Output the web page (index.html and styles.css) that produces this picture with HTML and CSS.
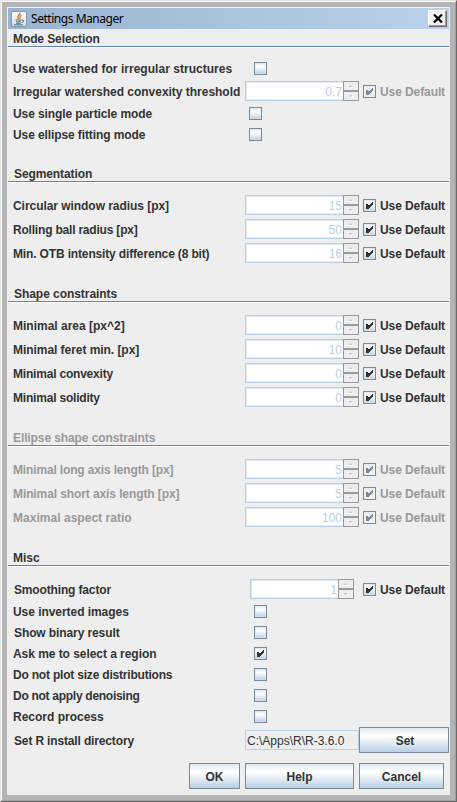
FILE: index.html
```html
<!DOCTYPE html>
<html lang="en">
<head>
<meta charset="utf-8">
<title>Settings Manager</title>
<link rel="stylesheet" href="styles.css">
</head>
<body>
<svg class="defs" width="0" height="0">
  <symbol id="check" viewBox="0 0 11 11"><path d="M2 4h2v1h2v-1h1v-1h1v-1h1v3h-1v1h-1v1h-1v1h-1v1h-3z"/></symbol>
  <symbol id="arrows" viewBox="0 0 16 20">
    <path fill="#999" d="M0 0h16v20H0z"/>
    <path fill="#eee" d="M1 1h14v8H1zM1 11h14v8H1z"/>
    <path fill="#fff" d="M7 6h3v1H7zM8 16h1v-1h1v1H9v1H8z"/>
    <path fill="#b8cfe5" d="M7 4h1v1h1v1H6V5h1zM6 14h3v1H8v1H7v-1H6z"/>
  </symbol>
</svg>
<main class="window">
  <header class="titlebar">
    <svg class="java" viewBox="0 0 16 16">
      <defs><linearGradient id="tile" x2="0" y2="1"><stop stop-color="#fff"/><stop offset="1" stop-color="#d4dce2"/></linearGradient></defs>
      <rect x=".5" y=".5" width="15" height="15" rx="1.5" fill="url(#tile)" stroke="#8995a0"/>
      <path d="M9 1.8C9.2 4 5.6 4.5 7 7l.8 1M10.5 4.2C7.4 5.6 9.8 6.4 8.4 8" fill="none" stroke="#e57a1c" stroke-width="1.4"/>
      <path d="M4.5 9h6M5 10.8h5M5.2 12.3h4.5M3 13.8h9M11 9.2c2.5-.7 2.2 2-.3 2.3" fill="none" stroke="#4a6f88" stroke-width="1"/>
    </svg>
    <h1>Settings Manager</h1>
    <button class="close" aria-label="Close"><svg viewBox="0 0 10 9"><path d="M1 .5l8 8M9 .5l-8 8" stroke="#000" stroke-width="2.2"/></svg></button>
  </header>

  <section>
    <h2 class="k2">Mode Selection</h2>
    <div class="rows">
      <div class="row"><label class="k0">Use watershed for irregular structures</label><i class="box mid"></i></div>
      <div class="row tall"><label class="k1 wide">Irregular watershed convexity threshold</label><div class="spin"><b>0.7</b><svg><use href="#arrows"/></svg></div><div class="default off"><i class="box"><svg><use href="#check"/></svg></i><span>Use Default</span></div></div>
      <div class="row"><label class="k2">Use single particle mode</label><i class="box near"></i></div>
      <div class="row"><label class="k2">Use ellipse fitting mode</label><i class="box near"></i></div>
    </div>
  </section>

  <section>
    <h2 class="k2 inset">Segmentation</h2>
    <div class="rows">
      <div class="row tall"><label class="k1">Circular window radius [px]</label><div class="spin"><b>15</b><svg><use href="#arrows"/></svg></div><div class="default"><i class="box"><svg><use href="#check"/></svg></i><span>Use Default</span></div></div>
      <div class="row tall"><label class="k4">Rolling ball radius [px]</label><div class="spin"><b>50</b><svg><use href="#arrows"/></svg></div><div class="default"><i class="box"><svg><use href="#check"/></svg></i><span>Use Default</span></div></div>
      <div class="row tall"><label class="k3">Min. OTB intensity difference (8 bit)</label><div class="spin"><b>16</b><svg><use href="#arrows"/></svg></div><div class="default"><i class="box"><svg><use href="#check"/></svg></i><span>Use Default</span></div></div>
    </div>
  </section>

  <section>
    <h2 class="k1 inset">Shape constraints</h2>
    <div class="rows">
      <div class="row tall"><label>Minimal area [px^2]</label><div class="spin"><b>0</b><svg><use href="#arrows"/></svg></div><div class="default"><i class="box"><svg><use href="#check"/></svg></i><span>Use Default</span></div></div>
      <div class="row tall"><label class="k1">Minimal feret min. [px]</label><div class="spin"><b>10</b><svg><use href="#arrows"/></svg></div><div class="default"><i class="box"><svg><use href="#check"/></svg></i><span>Use Default</span></div></div>
      <div class="row tall"><label class="k4">Minimal convexity</label><div class="spin"><b>0</b><svg><use href="#arrows"/></svg></div><div class="default"><i class="box"><svg><use href="#check"/></svg></i><span>Use Default</span></div></div>
      <div class="row tall"><label class="k4">Minimal solidity</label><div class="spin"><b>0</b><svg><use href="#arrows"/></svg></div><div class="default"><i class="box"><svg><use href="#check"/></svg></i><span>Use Default</span></div></div>
    </div>
  </section>

  <section class="disabled">
    <h2 class="k2">Ellipse shape constraints</h2>
    <div class="rows">
      <div class="row tall"><label class="k3">Minimal long axis length [px]</label><div class="spin"><b>5</b><svg><use href="#arrows"/></svg></div><div class="default off"><i class="box"><svg><use href="#check"/></svg></i><span>Use Default</span></div></div>
      <div class="row tall"><label class="k2">Minimal short axis length [px]</label><div class="spin"><b>5</b><svg><use href="#arrows"/></svg></div><div class="default off"><i class="box"><svg><use href="#check"/></svg></i><span>Use Default</span></div></div>
      <div class="row tall"><label class="k0">Maximal aspect ratio</label><div class="spin"><b>100</b><svg><use href="#arrows"/></svg></div><div class="default off"><i class="box"><svg><use href="#check"/></svg></i><span>Use Default</span></div></div>
    </div>
  </section>

  <section>
    <h2>Misc</h2>
    <div class="rows last">
      <div class="row tall"><label class="k3 inset">Smoothing factor</label><div class="spin narrow"><b>1</b><svg><use href="#arrows"/></svg></div><div class="default"><i class="box"><svg><use href="#check"/></svg></i><span>Use Default</span></div></div>
      <div class="row"><label class="k1">Use inverted images</label><i class="box mid"></i></div>
      <div class="row"><label class="k2 inset">Show binary result</label><i class="box mid"></i></div>
      <div class="row"><label class="k1">Ask me to select a region</label><i class="box mid"><svg><use href="#check"/></svg></i></div>
      <div class="row"><label class="k4">Do not plot size distributions</label><i class="box mid"></i></div>
      <div class="row"><label class="k5">Do not apply denoising</label><i class="box mid"></i></div>
      <div class="row"><label>Record process</label><i class="box mid"></i></div>
      <div class="row path"><label class="k3 inset">Set R install directory</label><div class="field">C:\Apps\R\R-3.6.0</div><button class="btn set">Set</button></div>
    </div>
  </section>

  <footer><button class="btn ok">OK</button><button class="btn help">Help</button><button class="btn cancel">Cancel</button></footer>
</main>
</body>
</html>
```
FILE: styles.css
```css
* { box-sizing: border-box; }
body {
  margin: 0;
  width: 457px;
  height: 802px;
  overflow: hidden;
  background: #b4b4b4;
  border: 1px solid;
  border-color: #e3e3e3 #696969 #696969 #e3e3e3;
  font: bold 12px/16px "Liberation Sans", Arial, sans-serif;
  color: #333;
}
.defs { position: absolute; }
.window {
  width: 455px;
  height: 800px;
  border: 1px solid;
  border-color: #fff #a0a0a0 #a0a0a0 #fff;
  padding: 6px 6px 0 6px;
  background: #eee;
  box-shadow: inset 0 0 0 5px #b4b4b4;
}
svg { display: block; flex: none; }
.titlebar {
  height: 21px;
  display: flex;
  align-items: center;
  background: linear-gradient(90deg, #99b4d1, #b9d1ea);
  padding: 0 2px 0 3px;
}
.java { width: 16px; height: 16px; margin-right: 4px; }
h1 { flex: 1; margin: 0; font: 12px/18px "Noto Sans", sans-serif; color: #000; letter-spacing: -.46px; }
.close {
  width: 19px;
  height: 17px;
  padding: 3px 4px;
  border: 1px solid;
  border-color: #fff #696969 #696969 #fff;
  box-shadow: inset -1px -1px #a0a0a0;
  background: #f0f0f0;
}
.close svg { width: 10px; height: 9px; }
h2 {
  margin: 0;
  height: 19px;
  padding-left: 5px;
  font-size: 12px;
  line-height: 20px;
  border-bottom: 1px solid #fff;
  box-shadow: inset 0 -1px #6382bf;
}
h2.inset { padding-left: 6px; }
label.inset { padding-left: 1px; }

/* per-label tracking */
.k0 { letter-spacing: .03px; }
.k1 { letter-spacing: -.05px; }
.k1.wide { letter-spacing: -.02px; }
.k2 { letter-spacing: -.1px; }
.k3 { letter-spacing: -.15px; }
.k4 { letter-spacing: -.2px; }
.k5 { letter-spacing: -.28px; }

.rows { padding: 10px 0 19px; }
.rows.last { padding-bottom: 10px; }
.row { display: flex; align-items: center; height: 21px; padding-left: 5px; }
.row.tall { height: 24px; }
.row.path { height: 26px; }
label { width: 232px; flex: none; white-space: nowrap; }
.tall label, .path label { padding-top: 2px; }
.box {
  flex: none;
  width: 13px;
  height: 13px;
  border: 1px solid #7a8a99;
  background: linear-gradient(#dde8f3, #fff 30%, #fff 35%, #b8cfe5);
  box-shadow: inset 0 0 0 1px rgba(221, 232, 243, .5);
}
.box svg { width: 11px; height: 11px; fill: #333; }
.mid { margin-left: 9px; }
.near { margin-left: 4px; }
.spin {
  display: flex;
  width: 114px;
  height: 20px;
  border: 1px solid #b8cfe5;
  border-right: 0;
  background: #fff;
  box-shadow: inset 1px 1px #dfe8f1, inset 0 -1px #e6edf4;
}
.spin b { flex: 1; text-align: right; font-weight: 400; line-height: 20px; padding-right: 1px; color: #b8cfe5; }
.spin svg { width: 16px; height: 20px; margin-top: -1px; }
.spin.narrow { width: 104px; margin: 0 5px; }
.default { display: flex; align-items: flex-start; height: 18px; margin-left: 4px; gap: 4px; white-space: nowrap; letter-spacing: -.09px; }
.default .box { margin-top: 3px; }
.default span { line-height: 20px; }
.off, .disabled h2, .disabled label { color: #999; }
.default.off .box { background: #eee; box-shadow: none; }
.default.off svg { fill: #7a8a99; }
.field { width: 114px; height: 20px; border: 1px solid #b8cfe5; font-weight: 400; line-height: 20px; padding-left: 1px; }
.btn {
  height: 26px;
  padding: 2px 0 0;
  border: 1px solid #7a8a99;
  border-radius: 0;
  background: linear-gradient(#dde8f3, #fff 30%, #fff 35%, #b8cfe5);
  font: inherit;
  color: inherit;
}
.set { width: 90px; padding-left: 2px; }
footer { display: flex; gap: 5px; margin-left: 181px; }
.ok { width: 51px; }
.help { width: 109px; }
.cancel { width: 85px; }
```
